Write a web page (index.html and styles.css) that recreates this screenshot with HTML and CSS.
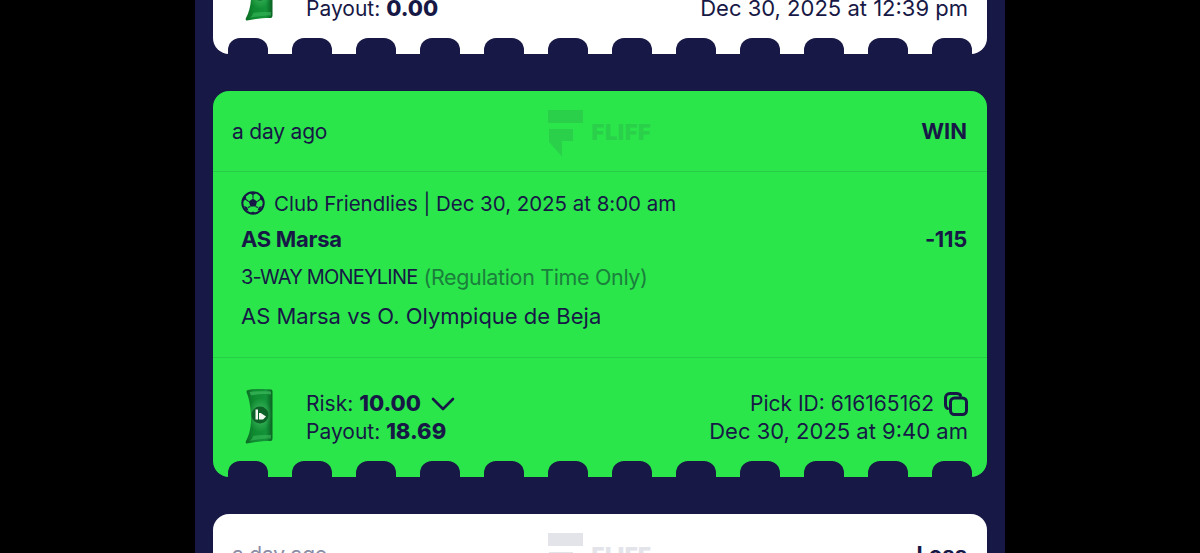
FILE: index.html
```html
<!DOCTYPE html>
<html lang="en">
<head>
<meta charset="utf-8">
<title>Fliff picks</title>
<link rel="stylesheet" href="styles.css">
</head>
<body>
<svg class="defs" aria-hidden="true">
  <defs>
    <linearGradient id="billFill" x1="0" y1="0" x2="1" y2="0">
      <stop offset="0" stop-color="#0b6b25"/><stop offset=".3" stop-color="#0f8a30"/>
      <stop offset=".75" stop-color="#14933a"/><stop offset="1" stop-color="#0a6222"/>
    </linearGradient>
    <radialGradient id="billGlow" cx=".5" cy=".5" r=".5">
      <stop offset="0" stop-color="#5fd47a" stop-opacity=".7"/><stop offset="1" stop-color="#5fd47a" stop-opacity="0"/>
    </radialGradient>
    <symbol id="bill" viewBox="0 0 28 56">
      <path d="M3 2C10 .5 20 .8 26 1.500C27.500 1.600 27.500 3 27.500 4V50C27.500 52 27 53 25.500 53C18 53 9 54 2 55.500C.5 55.500 .5 54 1 53C5 46 6.500 36 6 27C5.500 18 4 10 1.800 5C1.300 3.500 1.500 2.300 3 2Z" fill="url(#billFill)"/>
      <ellipse cx="15" cy="27" rx="12" ry="17" fill="url(#billGlow)"/>
      <path d="M4.500 4C11 3 20 3 26 3.400V6.500C19 5.800 13 6 6 7.500C5.500 6.300 5 5 4.500 4Z" fill="#3dbb5c" opacity=".7"/>
      <path d="M8 48C14 47 21 47 26 47V50.500C18 50.500 11 51.500 5 53C6.500 51.500 7.500 50 8 48Z" fill="#3dbb5c" opacity=".55"/>
      <circle cx="15" cy="27" r="8.500" fill="#0d6128"/>
      <path d="M10.500 21.500H13V31.500H10.500ZM14 25H15.800L21 28.500L18 31.500H14Z" fill="#f2f7f0"/>
    </symbol>
    <symbol id="chev" viewBox="0 0 24 14">
      <path d="M2 2L12 12L22 2" fill="none" stroke="#171845" stroke-width="2.600" stroke-linecap="round" stroke-linejoin="round"/>
    </symbol>
    <symbol id="copy" viewBox="0 0 24 24">
      <rect x="6.500" y="6" width="16" height="16.500" rx="4" fill="none" stroke="#171845" stroke-width="3"/>
      <path d="M3.500 16.500C2 15.800 1.500 14.500 1.500 12.500V6C1.500 3.200 3.200 1.500 6 1.500H12.500C14.500 1.500 15.800 2 16.500 3.500" fill="none" stroke="#171845" stroke-width="3" stroke-linecap="round"/>
    </symbol>
    <symbol id="ball" viewBox="0 0 24 24">
      <circle cx="12" cy="12" r="10.700" fill="none" stroke="#171845" stroke-width="2"/>
      <path d="M12 7.500L16.200 10.600L14.600 15.500H9.400L7.800 10.600Z" fill="#171845"/>
      <path d="M9 2.200L12 4.300L15 2.200L12 1ZM19 5L18.800 8.500L22 10L21 6.500ZM5 5L5.200 8.500L2 10L3 6.500ZM2.800 15L6 16L7.500 19.500L4.800 18.800ZM21.200 15L18 16L16.500 19.500L19.200 18.800ZM9 22.300L12 20.500L15 22.300L12 23Z" fill="#171845"/>
      <path d="M12 7.500V4M16.200 10.600L19 8.500M14.600 15.500L17 16.500M9.400 15.500L7 16.500M7.800 10.600L5 8.500" stroke="#171845" stroke-width="1.100" fill="none"/>
    </symbol>
    <symbol id="mark" viewBox="0 0 36 48">
      <path d="M0 0H35V13H0ZM1 19H25V31H14V46.500L1 32Z" fill="currentColor"/>
    </symbol>
  </defs>
</svg>

<main class="feed">
  <article class="card card-white card-top">
    <div class="foot">
      <svg class="bill"><use href="#bill"/></svg>
      <div class="amounts">
        <div class="line">Payout: <b>0.00</b></div>
      </div>
      <div class="meta">
        <div class="line date">Dec 30, 2025 at 12:39 pm</div>
      </div>
    </div>
    <div class="notches"><i></i><i></i><i></i><i></i><i></i><i></i><i></i><i></i><i></i><i></i><i></i><i></i></div>
  </article>

  <article class="card card-green">
    <header class="head">
      <span class="ago">a day ago</span>
      <div class="logo"><svg class="mark"><use href="#mark"/></svg><span class="logo-word">FLIFF</span></div>
      <strong class="result">WIN</strong>
    </header>
    <section class="pick">
      <div class="league"><svg class="ball"><use href="#ball"/></svg><span>Club Friendlies | Dec 30, 2025 at 8:00 am</span></div>
      <div class="team"><strong>AS Marsa</strong><strong>-115</strong></div>
      <div class="market"><span class="market-name">3-WAY MONEYLINE</span> <span class="note">(Regulation Time Only)</span></div>
      <div class="match">AS Marsa vs O. Olympique de Beja</div>
    </section>
    <div class="foot foot-rule">
      <svg class="bill"><use href="#bill"/></svg>
      <div class="amounts">
        <div class="line">Risk: <b>10.00</b><svg class="chev"><use href="#chev"/></svg></div>
        <div class="line">Payout: <b>18.69</b></div>
      </div>
      <div class="meta">
        <div class="line">Pick ID: 616165162<svg class="copy"><use href="#copy"/></svg></div>
        <div class="line date">Dec 30, 2025 at 9:40 am</div>
      </div>
    </div>
    <div class="notches"><i></i><i></i><i></i><i></i><i></i><i></i><i></i><i></i><i></i><i></i><i></i><i></i></div>
  </article>

  <article class="card card-white card-next">
    <header class="head">
      <span class="ago">a day ago</span>
      <div class="logo"><svg class="mark"><use href="#mark"/></svg><span class="logo-word">FLIFF</span></div>
      <strong class="result">Loss</strong>
    </header>
  </article>
</main>
</body>
</html>
```

FILE: styles.css
```css
* { box-sizing: border-box; }
html, body { margin: 0; height: 100%; background: #000; overflow: hidden; }
body { font-family: "Inter", "Noto Sans", sans-serif; color: #171845; }
.defs { width: 0; height: 0; display: block; }

.feed {
  width: 810px;
  height: 553px;
  margin: 0 auto;
  padding: 0 18px;
  background: #171845;
  overflow: hidden;
  display: flex;
  flex-direction: column;
  gap: 37px;
}

.card { flex: none; border-radius: 16px; display: flex; flex-direction: column; overflow: hidden; }
.card-white { background: #fff; }
.card-green { background: #2ae64b; height: 386px; }
.card-top { height: 54px; justify-content: flex-end; border-radius: 0 0 16px 16px; }
.card-next { height: 120px; }

.head {
  height: 81px;
  padding: 0 20px 0 19px;
  display: grid;
  grid-template-columns: 1fr auto 1fr;
  align-items: center;
  border-bottom: 1px solid #27cf48;
  flex: none;
}
.ago { font-size: 21px; letter-spacing: -0.200px; }
.result { font-size: 22px; font-weight: 700; text-align: right; }
.card-next .ago { color: #8b8ca6; }
.card-next .head { border-bottom-color: #e4e5ea; }

.logo { display: flex; align-items: center; gap: 8px; color: #2ad04a; }
.card-next .logo { color: #e3e4ea; }
.mark { width: 36px; height: 48px; margin-top: 5px; }
.logo-word { font-size: 22px; font-weight: 900; letter-spacing: 0.500px; margin-top: 2px; }

.pick {
  flex: none;
  height: 186px;
  padding: 18px 20px 0 28px;
  border-bottom: 1px solid #27cf48;
  font-size: 20px;
}
.league { display: flex; align-items: center; gap: 9px; height: 26px; font-size: 20.500px; letter-spacing: -0.030px; }
.ball { width: 24px; height: 24px; flex: none; }
.team { display: flex; justify-content: space-between; font-size: 22px; margin-top: 8px; line-height: 30px; }
.team strong { font-weight: 700; letter-spacing: -0.300px; }
.market { margin-top: 8px; line-height: 30px; display: flex; gap: 6px; }
.market-name { letter-spacing: -0.800px; }
.note { color: #1b7f3c; font-size: 21.500px; letter-spacing: -0.350px; }
.match { margin-top: 9px; line-height: 30px; font-size: 22px; }

.foot {
  flex: none;
  display: flex;
  align-items: flex-end;
  padding: 0 19px 16px 32px;
  font-size: 21px;
}
.foot-rule { height: 103px; }
.bill { width: 28px; height: 56px; flex: none; margin-bottom: 1px; }
.amounts { margin-left: 33px; flex: 1; }
.meta { text-align: right; }
.line { line-height: 27.500px; display: flex; align-items: center; white-space: pre; }
.meta .line { justify-content: flex-end; }
.date { font-size: 22px; }
.line b { font-weight: 800; font-size: 22px; }
.chev { width: 24px; height: 14px; margin-left: 10px; }
.copy { width: 24px; height: 24px; margin-left: 10px; }

.notches { flex: none; height: 16px; padding: 0 15px; display: flex; justify-content: space-between; }
.notches i { width: 40px; height: 16px; background: #171845; border-radius: 12px 12px 0 0; }
```
